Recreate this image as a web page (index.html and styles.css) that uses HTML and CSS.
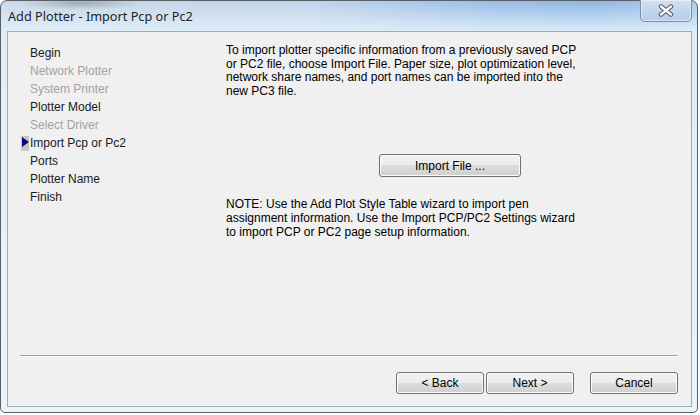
FILE: index.html
```html
<!DOCTYPE html>
<html>
<head>
	<title>Add Plotter - Import Pcp or Pc2</title>
	<link rel="stylesheet" href="styles.css">
</head>
<body>
	<div class="window">
		<div class="titlebar">
			<span class="title">Add Plotter - Import Pcp or Pc2</span>
			<button class="close">
				<svg width="18" height="13" viewBox="0 0 18 13">
					<path d="M4 2.5 L14 10.5 M14 2.5 L4 10.5" stroke="#4b5563" stroke-width="4.4" stroke-linecap="round" fill="none"/>
					<path d="M4 2.5 L14 10.5 M14 2.5 L4 10.5" stroke="#ffffff" stroke-width="2.4" stroke-linecap="round" fill="none"/>
				</svg>
			</button>
		</div>
		<div class="client">
			<div class="main">
				<ul class="steps">
					<li>Begin</li>
					<li class="disabled">Network Plotter</li>
					<li class="disabled">System Printer</li>
					<li>Plotter Model</li>
					<li class="disabled">Select Driver</li>
					<li class="current">Import Pcp or Pc2</li>
					<li>Ports</li>
					<li>Plotter Name</li>
					<li>Finish</li>
				</ul>
				<div class="content">
					<p>To import plotter specific information from a previously saved PCP<br>
					or PC2 file, choose Import File. Paper size, plot optimization level,<br>
					network share names, and port names can be imported into the<br>
					new PC3 file.</p>
					<div class="import-row">
						<button class="btn btn-import">Import File ...</button>
					</div>
					<p class="note">NOTE: Use the Add Plot Style Table wizard to import pen<br>
					assignment information. Use the Import PCP/PC2 Settings wizard<br>
					to import PCP or PC2 page setup information.</p>
				</div>
			</div>
			<div class="separator"></div>
			<div class="footer">
				<button class="btn">&lt; Back</button>
				<button class="btn">Next &gt;</button>
				<button class="btn cancel">Cancel</button>
			</div>
		</div>
	</div>
</body>
</html>
```

FILE: styles.css
```css
* {
	margin: 0px;
	padding: 0px;
	box-sizing: border-box;
}
body {
	background: #fff;
	font-family: "Liberation Sans", Arial, sans-serif;
	font-size: 12px;
	color: #000;
}
.window {
	width: 698px;
	height: 413px;
	border: 1px solid #5a5f66;
	border-radius: 7px 7px 5px 5px;
	padding: 0 5px 5px 6px;
	display: flex;
	flex-direction: column;
	background:
		radial-gradient(ellipse 60px 7px at 80px 2px, rgba(80, 88, 100, 0.35), rgba(80, 88, 100, 0)),
		linear-gradient(to bottom, rgba(255, 255, 255, 0) 0px, rgba(226, 240, 251, 0.9) 30px, rgba(232, 246, 250, 1) 100%),
		linear-gradient(to right, #cbd8e6 0%, #bfd3e9 45%, #99bde6 70%, #8fb6e2 85%, #a8c7ea 100%);
}
.titlebar {
	height: 30px;
	display: flex;
	align-items: flex-start;
}
.title {
	font-family: "Noto Sans", sans-serif;
	font-size: 12.7px;
	line-height: 30px;
	color: #1b1f26;
	padding-left: 1px;
}
.close {
	margin-left: auto;
	margin-top: -1px;
	width: 52px;
	height: 22px;
	border: 1px solid rgba(70, 90, 120, 0.6);
	border-top: none;
	border-radius: 0 0 5px 5px;
	background: linear-gradient(to bottom, #d4e2f1, #c2d6ec 50%, #b6cee9);
	box-shadow: inset 0 0 0 1px rgba(255, 255, 255, 0.45);
	display: flex;
	align-items: center;
	justify-content: center;
}
.client {
	height: 376px;
	border: 1px solid #a2abb4;
	background: #f0f0f0;
	display: flex;
	flex-direction: column;
}
.main {
	flex: 1;
	display: flex;
}
.steps {
	list-style: none;
	width: 218px;
	padding: 12px 0 0 22px;
}
.steps li {
	position: relative;
	line-height: 18px;
	color: #1a1a1a;
}
.steps li.disabled {
	color: #a3a3a3;
}
.steps li.current::before {
	content: "";
	position: absolute;
	left: -9px;
	top: 2px;
	width: 8px;
	height: 15px;
	background: #c6c6c6;
}
.steps li.current::after {
	content: "";
	position: absolute;
	left: -8px;
	top: 3px;
	border-left: 7px solid #0a0a80;
	border-top: 5px solid transparent;
	border-bottom: 5px solid transparent;
}
.content {
	width: 448px;
	padding-top: 12px;
}
.content p {
	line-height: 13.6px;
}
.import-row {
	display: flex;
	justify-content: center;
	margin-top: 56px;
}
.btn {
	font-family: "Liberation Sans", Arial, sans-serif;
	font-size: 12px;
	color: #000;
	width: 88px;
	height: 22px;
	border: 1px solid #707070;
	border-radius: 3px;
	background: linear-gradient(to bottom, #f2f2f2 0%, #ebebeb 50%, #dddddd 50%, #cfcfcf 100%);
	box-shadow: inset 0 0 0 1px #fcfcfc;
}
.btn-import {
	width: 142px;
	height: 23px;
}
.content p.note {
	margin-top: 21px;
}
.separator {
	margin: 0 13px 0 12px;
	border-top: 1px solid #a0a0a0;
	border-bottom: 1px solid #ffffff;
}
.footer {
	display: flex;
	justify-content: flex-end;
	gap: 2px;
	padding: 15px 13px 12px 0;
}
.footer .cancel {
	margin-left: 14px;
}
```
